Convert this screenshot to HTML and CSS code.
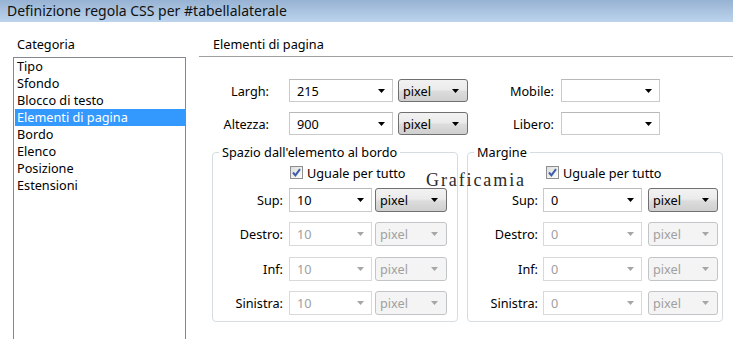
FILE: index.html
```html
<!DOCTYPE html>
<html lang="it">
<head>
<meta charset="utf-8">
<title>Definizione regola CSS</title>
<link rel="stylesheet" href="styles.css">
</head>
<body>
<div class="titlebar">Definizione regola CSS per #tabellalaterale</div>
<div class="main">
  <div class="side">
    <div class="side-head">Categoria</div>
    <ul class="catlist">
      <li>Tipo</li>
      <li>Sfondo</li>
      <li>Blocco di testo</li>
      <li class="sel">Elementi di pagina</li>
      <li>Bordo</li>
      <li>Elenco</li>
      <li>Posizione</li>
      <li>Estensioni</li>
    </ul>
  </div>
  <div class="panel">
    <div class="panel-head">Elementi di pagina</div>
    <div class="dims">
      <div class="dim-row">
        <span class="lbl">Largh:</span>
        <span class="combo w104"><span class="val">215</span><svg class="arr" width="7" height="4" viewBox="0 0 7 4"><path d="M0 0H7L3.5 4Z"/></svg></span>
        <span class="unit w70"><span class="val">pixel</span><svg class="arr" width="7" height="4" viewBox="0 0 7 4"><path d="M0 0H7L3.5 4Z"/></svg></span>
        <span class="lbl2">Mobile:</span>
        <span class="combo w99"><span class="val"></span><svg class="arr" width="7" height="4" viewBox="0 0 7 4"><path d="M0 0H7L3.5 4Z"/></svg></span>
      </div>
      <div class="dim-row">
        <span class="lbl">Altezza:</span>
        <span class="combo w104"><span class="val">900</span><svg class="arr" width="7" height="4" viewBox="0 0 7 4"><path d="M0 0H7L3.5 4Z"/></svg></span>
        <span class="unit w70"><span class="val">pixel</span><svg class="arr" width="7" height="4" viewBox="0 0 7 4"><path d="M0 0H7L3.5 4Z"/></svg></span>
        <span class="lbl2">Libero:</span>
        <span class="combo w99"><span class="val"></span><svg class="arr" width="7" height="4" viewBox="0 0 7 4"><path d="M0 0H7L3.5 4Z"/></svg></span>
      </div>
    </div>
    <div class="groups">
      <div class="group g1">
        <div class="legend">Spazio dall'elemento al bordo</div>
        <div class="check-row">
          <svg class="cb" width="13" height="13" viewBox="0 0 13 13"><defs><linearGradient id="cbg1" x1="0" y1="0" x2="1" y2="1"><stop offset="0" stop-color="#dcdcdc"/><stop offset="1" stop-color="#ffffff"/></linearGradient></defs><rect x="0.5" y="0.5" width="12" height="12" fill="url(#cbg1)" stroke="#8e8f8f"/><path d="M3 6.5L5.4 9.3L10 3.2" fill="none" stroke="#3d5ea9" stroke-width="2"/></svg>
          <span>Uguale per tutto</span>
        </div>
        <div class="row">
          <span class="glbl">Sup:</span>
          <span class="combo gi"><span class="val">10</span><svg class="arr" width="7" height="4" viewBox="0 0 7 4"><path d="M0 0H7L3.5 4Z"/></svg></span>
          <span class="unit gu"><span class="val">pixel</span><svg class="arr" width="7" height="4" viewBox="0 0 7 4"><path d="M0 0H7L3.5 4Z"/></svg></span>
        </div>
        <div class="row dis">
          <span class="glbl">Destro:</span>
          <span class="combo gi"><span class="val">10</span><svg class="arr" width="7" height="4" viewBox="0 0 7 4"><path d="M0 0H7L3.5 4Z"/></svg></span>
          <span class="unit gu"><span class="val">pixel</span><svg class="arr" width="7" height="4" viewBox="0 0 7 4"><path d="M0 0H7L3.5 4Z"/></svg></span>
        </div>
        <div class="row dis r3">
          <span class="glbl">Inf:</span>
          <span class="combo gi"><span class="val">10</span><svg class="arr" width="7" height="4" viewBox="0 0 7 4"><path d="M0 0H7L3.5 4Z"/></svg></span>
          <span class="unit gu"><span class="val">pixel</span><svg class="arr" width="7" height="4" viewBox="0 0 7 4"><path d="M0 0H7L3.5 4Z"/></svg></span>
        </div>
        <div class="row dis">
          <span class="glbl">Sinistra:</span>
          <span class="combo gi"><span class="val">10</span><svg class="arr" width="7" height="4" viewBox="0 0 7 4"><path d="M0 0H7L3.5 4Z"/></svg></span>
          <span class="unit gu"><span class="val">pixel</span><svg class="arr" width="7" height="4" viewBox="0 0 7 4"><path d="M0 0H7L3.5 4Z"/></svg></span>
        </div>
      </div>
      <div class="group g2">
        <div class="legend">Margine</div>
        <div class="check-row">
          <svg class="cb" width="13" height="13" viewBox="0 0 13 13"><defs><linearGradient id="cbg2" x1="0" y1="0" x2="1" y2="1"><stop offset="0" stop-color="#dcdcdc"/><stop offset="1" stop-color="#ffffff"/></linearGradient></defs><rect x="0.5" y="0.5" width="12" height="12" fill="url(#cbg2)" stroke="#8e8f8f"/><path d="M3 6.5L5.4 9.3L10 3.2" fill="none" stroke="#3d5ea9" stroke-width="2"/></svg>
          <span>Uguale per tutto</span>
        </div>
        <div class="row">
          <span class="glbl">Sup:</span>
          <span class="combo gi"><span class="val">0</span><svg class="arr" width="7" height="4" viewBox="0 0 7 4"><path d="M0 0H7L3.5 4Z"/></svg></span>
          <span class="unit gu"><span class="val">pixel</span><svg class="arr" width="7" height="4" viewBox="0 0 7 4"><path d="M0 0H7L3.5 4Z"/></svg></span>
        </div>
        <div class="row dis">
          <span class="glbl">Destro:</span>
          <span class="combo gi"><span class="val">0</span><svg class="arr" width="7" height="4" viewBox="0 0 7 4"><path d="M0 0H7L3.5 4Z"/></svg></span>
          <span class="unit gu"><span class="val">pixel</span><svg class="arr" width="7" height="4" viewBox="0 0 7 4"><path d="M0 0H7L3.5 4Z"/></svg></span>
        </div>
        <div class="row dis r3">
          <span class="glbl">Inf:</span>
          <span class="combo gi"><span class="val">0</span><svg class="arr" width="7" height="4" viewBox="0 0 7 4"><path d="M0 0H7L3.5 4Z"/></svg></span>
          <span class="unit gu"><span class="val">pixel</span><svg class="arr" width="7" height="4" viewBox="0 0 7 4"><path d="M0 0H7L3.5 4Z"/></svg></span>
        </div>
        <div class="row dis">
          <span class="glbl">Sinistra:</span>
          <span class="combo gi"><span class="val">0</span><svg class="arr" width="7" height="4" viewBox="0 0 7 4"><path d="M0 0H7L3.5 4Z"/></svg></span>
          <span class="unit gu"><span class="val">pixel</span><svg class="arr" width="7" height="4" viewBox="0 0 7 4"><path d="M0 0H7L3.5 4Z"/></svg></span>
        </div>
      </div>
    </div>
  </div>
</div>
<div class="watermark">Graficamia</div>
</body>
</html>
```

FILE: styles.css
```css
* { box-sizing: border-box; }
html, body { margin: 0; padding: 0; }
body {
  width: 733px;
  height: 339px;
  overflow: hidden;
  position: relative;
  background: #ffffff;
  font-family: "Noto Sans", "Open Sans", sans-serif;
  font-size: 12.7px;
  color: #000;
}
.titlebar {
  height: 22px;
  line-height: 22px;
  padding-left: 7px;
  font-size: 14px;
  color: #111;
  background: linear-gradient(#97b3d3, #bcd4ed);
}
.main {
  display: flex;
  height: 317px;
}
.side {
  margin-left: 13px;
  width: 173px;
  display: flex;
  flex-direction: column;
}
.side-head {
  height: 35px;
  padding: 14px 0 0 4px;
  line-height: 16px;
}
.catlist {
  flex: 1;
  margin: 0;
  padding: 0;
  list-style: none;
  border: 1px solid #828790;
  border-bottom: none;
}
.catlist li {
  height: 17px;
  line-height: 17px;
  padding-left: 2px;
  margin-left: 1px;
}
.catlist li.sel {
  background: #3399ff;
  color: #fff;
}
.panel {
  margin-left: 13px;
  flex: 1;
}
.panel-head {
  height: 35px;
  padding: 14px 0 0 14px;
  line-height: 16px;
  border-bottom: 1px solid #a0a0a0;
}
.dims {
  padding-top: 22px;
}
.dim-row {
  display: flex;
  align-items: center;
  height: 23px;
}
.dim-row + .dim-row { margin-top: 10px; }
.lbl {
  width: 70px;
  text-align: right;
  margin-right: 20px;
}
.lbl2 {
  width: 86px;
  text-align: right;
  margin-right: 7px;
}
.combo, .unit {
  display: flex;
  align-items: center;
  height: 100%;
}
.combo {
  border: 1px solid #cacaca;
  border-top-color: #b8b8b8;
  background: #fff;
}
.combo .val { flex: 1; padding-left: 7px; }
.combo .arr { margin-right: 7px; fill: #000; }
.unit {
  border: 1px solid #707070;
  border-radius: 3px;
  background: linear-gradient(#f2f2f2 0%, #ebebeb 45%, #dcdcdc 55%, #cfcfcf 100%);
  margin-left: 5px;
}
.unit .val { flex: 1; padding-left: 4px; }
.unit .arr { margin-right: 8px; fill: #000; }
.w104 { width: 104px; }
.w99 { width: 99px; }
.w70 { width: 70px; }
.groups {
  display: flex;
  gap: 9px;
  margin-top: 17px;
  padding-left: 13px;
}
.group {
  height: 170px;
  border: 1px solid #d5dde2;
  border-radius: 4px;
  padding-bottom: 6px;
}
.g1 { width: 246px; }
.g2 { width: 256px; }
.legend {
  width: fit-content;
  margin: -8px 0 0 6px;
  padding: 0 3px;
  line-height: 15px;
  background: #fff;
}
.check-row {
  display: flex;
  align-items: center;
  gap: 4px;
  height: 15px;
  margin-top: 5px;
}
.g1 .check-row { padding-left: 77px; }
.g2 .check-row { padding-left: 78px; }
.row {
  display: flex;
  align-items: center;
  height: 24px;
  margin-top: 10px;
}
.check-row + .row { margin-top: 8px; }
.row.r3 { margin-top: 11px; }
.glbl {
  width: 70px;
  text-align: right;
  margin-right: 6px;
}
.g2 .glbl { margin-right: 5px; }
.g1 .gi { width: 83px; }
.g1 .gu { width: 72px; margin-left: 3px; }
.g2 .gi { width: 99px; }
.g2 .gu { width: 70px; margin-left: 6px; }
.row.dis .combo { border-color: #d9d9d9; color: #a0a0a0; }
.row.dis .combo .arr { fill: #a6a6a6; }
.row.dis .unit {
  border-color: #c2c5c7;
  background: #f4f4f4;
  color: #a0a0a0;
}
.row.dis .unit .arr { fill: #a6a6a6; }
.watermark {
  position: absolute;
  left: 426px;
  top: 170px;
  font-family: "Liberation Serif", serif;
  font-size: 18px;
  letter-spacing: 1.9px;
  color: #2a2a2a;
}
```
